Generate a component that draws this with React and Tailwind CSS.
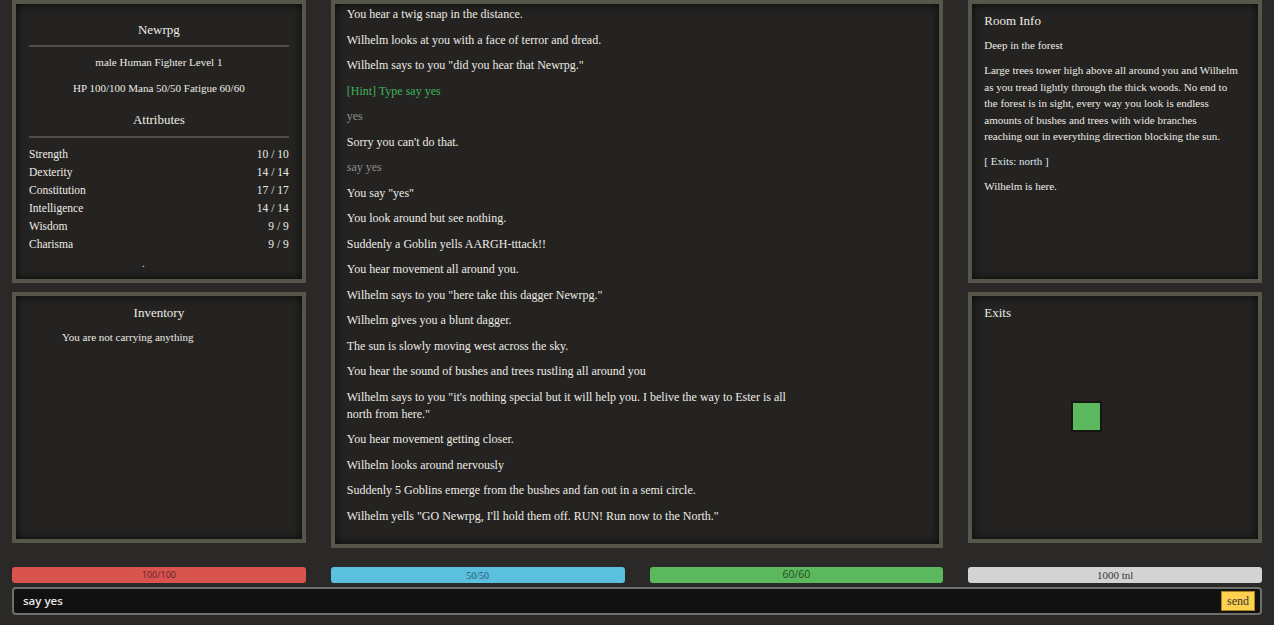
import React from "react";

const panel =
  "border-4 border-[#57564b] bg-[#242322] shadow-[inset_0_0_10px_rgba(0,0,0,0.75)]";

const stats = [
  ["Strength", "10 / 10"],
  ["Dexterity", "14 / 14"],
  ["Constitution", "17 / 17"],
  ["Intelligence", "14 / 14"],
  ["Wisdom", "9 / 9"],
  ["Charisma", "9 / 9"],
];

const log = [
  ["You hear a twig snap in the distance.", "n"],
  ["Wilhelm looks at you with a face of terror and dread.", "n"],
  ['Wilhelm says to you "did you hear that Newrpg."', "n"],
  ["[Hint] Type say yes", "h"],
  ["yes", "e"],
  ["Sorry you can't do that.", "n"],
  ["say yes", "e"],
  ['You say "yes"', "n"],
  ["You look around but see nothing.", "n"],
  ["Suddenly a Goblin yells AARGH-tttack!!", "n"],
  ["You hear movement all around you.", "n"],
  ['Wilhelm says to you "here take this dagger Newrpg."', "n"],
  ["Wilhelm gives you a blunt dagger.", "n"],
  ["The sun is slowly moving west across the sky.", "n"],
  ["You hear the sound of bushes and trees rustling all around you", "n"],
  [
    'Wilhelm says to you "it\'s nothing special but it will help you. I belive the way to Ester is all north from here."',
    "n",
  ],
  ["You hear movement getting closer.", "n"],
  ["Wilhelm looks around nervously", "n"],
  ["Suddenly 5 Goblins emerge from the bushes and fan out in a semi circle.", "n"],
  ['Wilhelm yells "GO Newrpg, I\'ll hold them off. RUN! Run now to the North."', "n"],
];

function LogLine({ text, kind }) {
  if (kind === "h") return <p className="text-[#3db35a]">{text}</p>;
  if (kind === "e") return <p className="text-[#8e8d8a]">{text}</p>;
  return <p>{text}</p>;
}

export default function App() {
  return (
    <div className="h-[625px] w-[1274px] overflow-hidden bg-[#2a2927] px-3 font-['Liberation_Serif',serif] text-[#eeebe4]">
      <div className="grid grid-cols-4 items-start gap-x-[25px]">
        {/* Left column */}
        <div className="flex flex-col gap-[9px]">
          <div className={`${panel} h-[283px] px-[13px] pt-[17px]`}>
            <div className="text-center text-[13px] leading-[18px]">Newrpg</div>
            <div className="mt-[6px] h-[2px] bg-[#4f4e48]" />
            <div className="mt-[7px] text-center text-[11px] leading-[16px]">
              male Human Fighter Level 1
            </div>
            <div className="mt-[10px] text-center text-[11px] leading-[16px]">
              HP 100/100 Mana 50/50 Fatigue 60/60
            </div>
            <div className="mt-[15px] text-center text-[13px] leading-[18px]">Attributes</div>
            <div className="mt-[7px] h-[2px] bg-[#4f4e48]" />
            <div className="mt-[8px] flex flex-col">
              {stats.map(([k, v]) => (
                <div key={k} className="flex h-[18px] items-center justify-between text-[11.5px]">
                  <span>{k}</span>
                  <span>{v}</span>
                </div>
              ))}
            </div>
            <div className="mt-[1px] pl-[113px] text-[11px] leading-[16px]">.</div>
          </div>
          <div className={`${panel} h-[251px] px-[13px] pt-[8px]`}>
            <div className="text-center text-[13px] leading-[18px]">Inventory</div>
            <div className="mt-[7px] pl-[33px] text-[11px] leading-[16px]">
              You are not carrying anything
            </div>
          </div>
        </div>

        {/* Center log */}
        <div className={`${panel} col-span-2 h-[548px] pl-[12px] pt-[2px]`}>
          <div className="flex max-w-[450px] flex-col gap-[8.5px] text-[12px] leading-[17px]">
            {log.map(([t, k], i) => (
              <LogLine key={i} text={t} kind={k} />
            ))}
          </div>
        </div>

        {/* Right column */}
        <div className="flex flex-col gap-[9px]">
          <div className={`${panel} h-[283px] px-[12px] pt-[8px]`}>
            <div className="text-[13px] leading-[18px]">Room Info</div>
            <div className="mt-[7px] flex flex-col gap-[8.5px] text-[11px] leading-[16.5px]">
              <p>Deep in the forest</p>
              <p>
                Large trees tower high above all around you and Wilhelm
                <br />
                as you tread lightly through the thick woods. No end to
                <br />
                the forest is in sight, every way you look is endless
                <br />
                amounts of bushes and trees with wide branches
                <br />
                reaching out in everything direction blocking the sun.
              </p>
              <p className="text-[#dfe7ee]">[ Exits: north ]</p>
              <p>Wilhelm is here.</p>
            </div>
          </div>
          <div className={`${panel} relative h-[251px] px-[12px] pt-[8px]`}>
            <div className="text-[13px] leading-[18px]">Exits</div>
            <div className="absolute left-[99px] top-[105px] h-[31px] w-[31px] border-2 border-[#151514] bg-[#5cb85c]" />
          </div>
        </div>
      </div>

      {/* Bars */}
      <div className="mt-[19px] grid grid-cols-4 gap-x-[25px]">
        <div className="flex h-[16px] items-center justify-center rounded-[3px] bg-[#d9534f] font-['Open_Sans',sans-serif] text-[9px] text-[#5c2422]">
          100/100
        </div>
        <div className="flex h-[16px] items-center justify-center rounded-[3px] bg-[#5bc0de] text-[10px] text-[#285a6e]">
          50/50
        </div>
        <div className="flex h-[16px] items-center justify-center rounded-[3px] bg-[#5cb85c] font-['Open_Sans',sans-serif] text-[10.5px] text-[#284a28]">
          60/60
        </div>
        <div className="flex h-[16px] items-center justify-center rounded-[3px] bg-[#d3d3d3] text-[11px] text-[#333]">
          1000 tnl
        </div>
      </div>

      {/* Input */}
      <div className="mt-[4px] flex h-[28px] items-center justify-between rounded-[4px] border-2 border-[#6f6f6c] bg-[#111111] pl-[9px] pr-[5px]">
        <span className="font-['Open_Sans',sans-serif] text-[11.5px] font-semibold text-[#e6e6e6]">
          say yes
        </span>
        <button className="flex h-[20px] w-[34px] items-center justify-center border border-[#a88520] bg-[#fdd04e] text-[12px] leading-none text-[#333]">
          send
        </button>
      </div>
    </div>
  );
}
